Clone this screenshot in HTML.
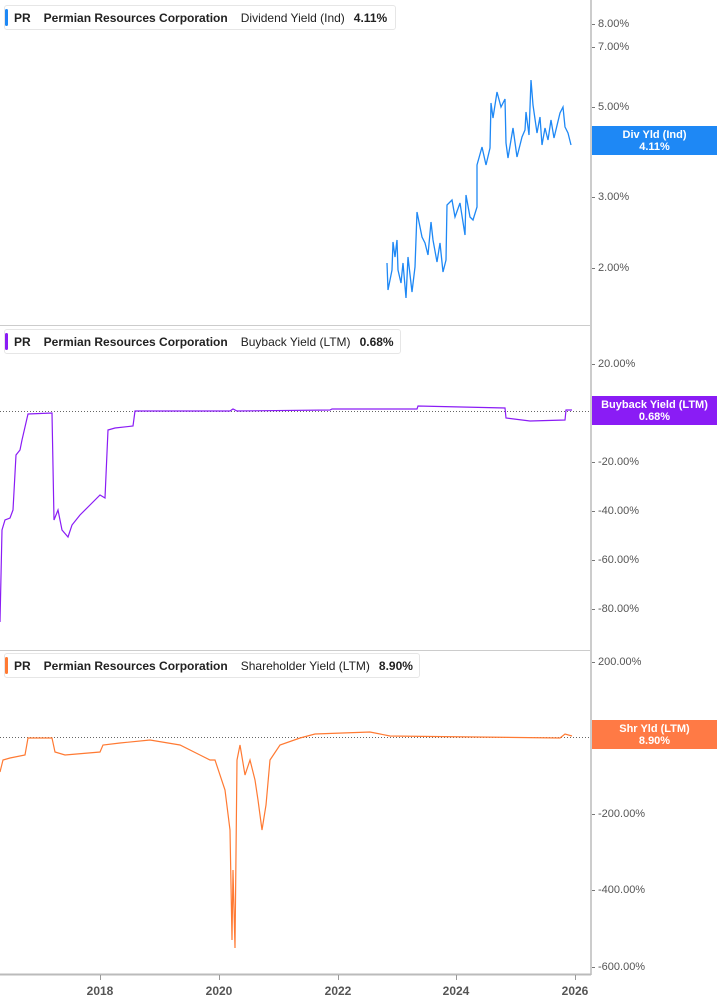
<!DOCTYPE html>
<html><head><meta charset="utf-8"><style>
body{margin:0;width:717px;height:1005px;background:#fff;font-family:"Liberation Sans",sans-serif;position:relative;overflow:hidden}
.leg{position:absolute;left:4px;height:25px;border:1px solid #e6e6e6;border-radius:3px;background:#fff;font-size:12px;color:#222;line-height:25px;white-space:nowrap;padding-left:9px;padding-right:8px;box-sizing:border-box}
.leg:before{content:"";position:absolute;left:0;top:3px;bottom:3px;width:3px;border-radius:2px;background:var(--c)}
.leg b{font-weight:bold;margin-right:13px}
.leg span{margin-right:9px}
.yl{position:absolute;left:598px;font-size:11px;color:#555;line-height:12px}
.yl:before{content:"";position:absolute;left:-6px;top:6px;width:3px;height:1px;background:#777}
.box{position:absolute;left:592px;width:125px;color:#fff;font-size:11px;font-weight:bold;text-align:center;line-height:12px;padding-top:3px;box-sizing:border-box}
.xl{position:absolute;top:984px;font-size:12px;font-weight:bold;color:#555;width:40px;margin-left:-20px;text-align:center}
</style></head><body>
<svg width="717" height="1005" style="position:absolute;left:0;top:0">
<line x1="591" y1="0" x2="591" y2="975" stroke="#999" stroke-width="1"/>
<line x1="0" y1="325.5" x2="591" y2="325.5" stroke="#ccc"/>
<line x1="0" y1="650.5" x2="591" y2="650.5" stroke="#ccc"/>
<line x1="0" y1="974.5" x2="591" y2="974.5" stroke="#bbb" stroke-width="2"/>
<g stroke="#999"><line x1="100.5" y1="975" x2="100.5" y2="980"/><line x1="219.5" y1="975" x2="219.5" y2="980"/><line x1="338.5" y1="975" x2="338.5" y2="980"/><line x1="456.5" y1="975" x2="456.5" y2="980"/><line x1="575.5" y1="975" x2="575.5" y2="980"/></g>
<line x1="0" y1="411.5" x2="591" y2="411.5" stroke="#666" stroke-dasharray="1,2"/>
<line x1="0" y1="737.5" x2="591" y2="737.5" stroke="#666" stroke-dasharray="1,2"/>
<polyline fill="none" stroke="#1e88f5" stroke-width="1.3" points="387,263 388,290 392,270 393,242 395,257 397,240 398,270 401,283 403,263 406,298 408,257 412,292 415,267 417,212 420,227 422,237 425,243 428,255 431,222 433,240 437,262 440,243 443,272 446,260 447,205 452,200 455,217 460,203 465,235 466,195 470,217 473,220 477,207 477,165 482,147 486,165 490,148 491,103 493,118 497,92 501,107 505,99 506,143 508,158 513,128 517,157 522,137 525,130 526,112 529,135 531,80 533,105 537,133 540,117 542,145 545,128 548,140 551,120 554,138 560,113 563,107 565,127 568,133 571,145"/>
<polyline fill="none" stroke="#8a1cf5" stroke-width="1.2" points="0,622 2,530 5,520 10,518 13,510 16,455 20,450 22,440 28,414 52,413 54,520 58,510 62,530 68,537 72,525 80,515 90,505 100,495 105,498 108,430 115,428 133,426 135,411 230,411 233,409 237,411 330,410 332,409 417,409 418,406 505,408 506,418 530,421 565,420 566,410 572,410"/>
<polyline fill="none" stroke="#ff7a33" stroke-width="1.2" points="0,772 3,760 10,758 25,755 28,738 52,738 55,752 65,755 100,752 103,745 120,743 150,740 180,745 200,755 210,760 215,760 225,790 230,830 232,940 233,870 235,948 237,760 240,745 245,775 250,760 255,780 258,800 262,830 266,805 270,760 280,745 300,738 315,734 370,732 390,736 560,738 565,734 572,736"/>
</svg>
<div class="leg" style="top:5px;width:392px;--c:#1e88f5"><b>PR</b><b>Permian Resources Corporation</b><span>Dividend Yield (Ind)</span><b>4.11%</b></div>
<div class="leg" style="top:329px;width:397px;--c:#8a1cf5"><b>PR</b><b>Permian Resources Corporation</b><span>Buyback Yield (LTM)</span><b>0.68%</b></div>
<div class="leg" style="top:653px;width:416px;--c:#ff7a33"><b>PR</b><b>Permian Resources Corporation</b><span>Shareholder Yield (LTM)</span><b>8.90%</b></div>
<div class="yl" style="top:18px">8.00%</div>
<div class="yl" style="top:41px">7.00%</div>
<div class="yl" style="top:101px">5.00%</div>
<div class="yl" style="top:191px">3.00%</div>
<div class="yl" style="top:262px">2.00%</div>
<div class="yl" style="top:358px">20.00%</div>
<div class="yl" style="top:456px">-20.00%</div>
<div class="yl" style="top:505px">-40.00%</div>
<div class="yl" style="top:554px">-60.00%</div>
<div class="yl" style="top:603px">-80.00%</div>
<div class="yl" style="top:656px">200.00%</div>
<div class="yl" style="top:808px">-200.00%</div>
<div class="yl" style="top:884px">-400.00%</div>
<div class="yl" style="top:961px">-600.00%</div>
<div class="box" style="top:126px;height:29px;background:#1e88f5">Div Yld (Ind)<br>4.11%</div>
<div class="box" style="top:396px;height:29px;background:#8a1cf5">Buyback Yield (LTM)<br>0.68%</div>
<div class="box" style="top:720px;height:29px;background:#ff7a45">Shr Yld (LTM)<br>8.90%</div>
<div class="xl" style="left:100px">2018</div>
<div class="xl" style="left:219px">2020</div>
<div class="xl" style="left:338px">2022</div>
<div class="xl" style="left:456px">2024</div>
<div class="xl" style="left:575px">2026</div>
</body></html>
